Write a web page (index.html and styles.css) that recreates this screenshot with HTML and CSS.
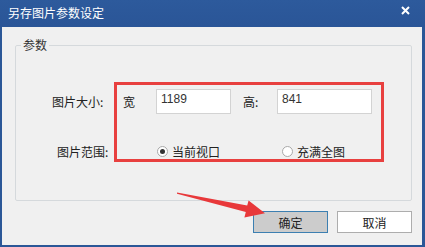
FILE: index.html
```html
<!DOCTYPE html>
<html lang="zh-CN">
<head>
    <meta charset="UTF-8">
    <title>另存图片参数设定</title>
    <link rel="stylesheet" href="styles.css">
</head>
<body>
    <div class="window">
        <div class="titlebar">
            <span class="title">另存图片参数设定</span>
            <svg class="close" width="9" height="9" viewBox="0 0 9 9">
                <path d="M1 1 L8 8 M8 1 L1 8" stroke="#fff" stroke-width="2"/>
            </svg>
        </div>

        <div class="body">
            <fieldset class="group">
                <legend>参数</legend>
                <div class="row size-row">
                    <span class="label">图片大小:</span>
                    <span class="unit">宽</span>
                    <input class="field w" type="text" value="1189">
                    <span class="unit h-label">高:</span>
                    <input class="field h" type="text" value="841">
                </div>
                <div class="row range-row">
                    <span class="label">图片范围:</span>
                    <label class="radio r1"><span class="dot checked"></span>当前视口</label>
                    <label class="radio r2"><span class="dot"></span>充满全图</label>
                </div>
            </fieldset>

            <div class="buttons">
                <button class="btn primary">确定</button>
                <button class="btn">取消</button>
            </div>
        </div>

        <!-- annotation overlays -->
        <div class="highlight"></div>
        <svg class="arrow" width="425" height="247" viewBox="0 0 425 247">
            <polygon fill="#e8383a" points="177,192.4 247.2,205.6 248.6,200.6 265,213.2 244.4,217.4 245.8,212 177,193.8"/>
        </svg>
    </div>
</body>
</html>
```

FILE: styles.css
```css
* {
    margin: 0;
    padding: 0;
    box-sizing: border-box;
}

body {
    font-family: "Noto Sans CJK SC", "Liberation Sans", sans-serif;
    font-size: 12px;
    color: #222;
    background: #f0f0f0;
}

.window {
    position: relative;
    width: 425px;
    height: 247px;
    background: #f0f0f0;
    border-left: 2px solid #2b5797;
    border-right: 3px solid #2b5797;
    border-bottom: 2px solid #2b5797;
    display: flex;
    flex-direction: column;
}

.titlebar {
    height: 27px;
    margin: 0 -3px 0 -2px;
    background: linear-gradient(#2d5a9c, #2a5597);
    color: white;
    display: flex;
    align-items: center;
    justify-content: space-between;
    padding: 0 15px 2px 8px;
}

.title {
    font-size: 12px;
    line-height: 14px;
}

.close {
    margin-top: -4px;
}

.body {
    flex: 1;
    padding: 11px 10px 0 13px;
}

.group {
    border: 1px solid #d5d9dc;
    border-radius: 2px;
    height: 163px;
    padding: 0;
}

.group legend {
    margin-left: 5px;
    padding: 0 2px;
    line-height: 14px;
    color: #333;
}

.row {
    display: flex;
    align-items: center;
}

.size-row {
    margin-top: 37px;
    height: 25px;
}

.range-row {
    margin-top: 29px;
    height: 16px;
}

.size-row .label {
    margin-left: 36px;
    width: 71px;
}

.range-row .label {
    margin-left: 41px;
    width: 100px;
}

.unit {
    width: 33px;
}

.h-label {
    margin-left: 12px;
    width: 34px;
}

.field {
    height: 25px;
    border: 1px solid #d3d3d3;
    background: white;
    font-family: "Liberation Sans", sans-serif;
    font-size: 12px;
    color: #333;
    padding: 0 4px 6px;
    outline: none;
}

.field.w { width: 75px; }
.field.h { width: 95px; }

.radio {
    display: flex;
    align-items: center;
    gap: 4px;
}

.r2 {
    margin-left: 62px;
}

.dot {
    width: 11px;
    height: 11px;
    border: 1px solid #a9a9a9;
    border-radius: 50%;
    background: white;
    display: flex;
    align-items: center;
    justify-content: center;
}

.dot.checked::after {
    content: "";
    width: 5px;
    height: 5px;
    border-radius: 50%;
    background: #333;
}

.buttons {
    display: flex;
    justify-content: flex-end;
    gap: 9px;
    margin-top: 10px;
}

.btn {
    width: 75px;
    height: 22px;
    border: 1px solid #adadad;
    background: white;
    font-family: inherit;
    font-size: 12px;
    color: #222;
}

.btn.primary {
    background: #cccccc;
    border-color: #3c7fb1;
}

.highlight {
    position: absolute;
    left: 112px;
    top: 82px;
    width: 270px;
    height: 80px;
    border: 3px solid #e8403f;
}

.arrow {
    position: absolute;
    left: -2px;
    top: 0;
}
```
